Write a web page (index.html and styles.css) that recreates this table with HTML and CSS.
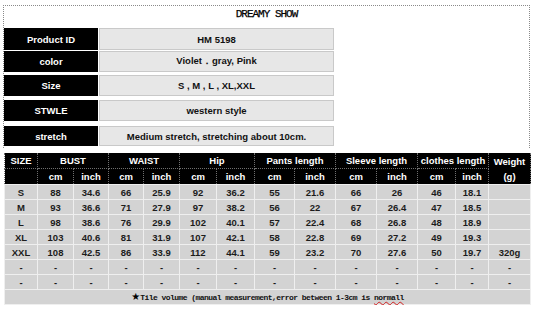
FILE: index.html
```html
<!DOCTYPE html>
<html>
<head>
<meta charset="utf-8">
<link rel="stylesheet" href="styles.css">
</head>
<body>
<div class="page">
  <section class="info">
    <div class="title">DREAMY SHOW</div>
    <div class="rows">
      <div class="row r1"><div class="label">Product ID</div><div class="value">HM 5198</div></div>
      <div class="row r2"><div class="label">color</div><div class="value">Violet．gray, Pink</div></div>
      <div class="row r3"><div class="label">Size</div><div class="value">S , M , L , XL,XXL</div></div>
      <div class="row r4"><div class="label">STWLE</div><div class="value">western style</div></div>
      <div class="row r5"><div class="label">stretch</div><div class="value">Medium stretch, stretching about 10cm.</div></div>
    </div>
  </section>
  <table class="sizes">
    <colgroup>
      <col class="w33"><col class="w36"><col class="w35"><col class="w35"><col class="w36"><col class="w37"><col class="w38">
      <col class="w40"><col class="w41"><col class="w41"><col class="w41"><col class="w38"><col class="w33"><col class="w42">
    </colgroup>
    <thead>
      <tr class="h1">
        <th>SIZE</th><th colspan="2">BUST</th><th colspan="2">WAIST</th><th colspan="2">Hip</th>
        <th colspan="2">Pants length</th><th colspan="2">Sleeve length</th><th colspan="2">clothes length</th>
        <th rowspan="2" class="weight">Weight<br>(g)</th>
      </tr>
      <tr class="h2">
        <th></th><th>cm</th><th>inch</th><th>cm</th><th>inch</th><th>cm</th><th>inch</th>
        <th>cm</th><th>inch</th><th>cm</th><th>inch</th><th>cm</th><th>inch</th>
      </tr>
    </thead>
    <tbody>
      <tr><td>S</td><td>88</td><td>34.6</td><td>66</td><td>25.9</td><td>92</td><td>36.2</td><td>55</td><td>21.6</td><td>66</td><td>26</td><td>46</td><td>18.1</td><td></td></tr>
      <tr><td>M</td><td>93</td><td>36.6</td><td>71</td><td>27.9</td><td>97</td><td>38.2</td><td>56</td><td>22</td><td>67</td><td>26.4</td><td>47</td><td>18.5</td><td></td></tr>
      <tr><td>L</td><td>98</td><td>38.6</td><td>76</td><td>29.9</td><td>102</td><td>40.1</td><td>57</td><td>22.4</td><td>68</td><td>26.8</td><td>48</td><td>18.9</td><td></td></tr>
      <tr><td>XL</td><td>103</td><td>40.6</td><td>81</td><td>31.9</td><td>107</td><td>42.1</td><td>58</td><td>22.8</td><td>69</td><td>27.2</td><td>49</td><td>19.3</td><td></td></tr>
      <tr><td>XXL</td><td>108</td><td>42.5</td><td>86</td><td>33.9</td><td>112</td><td>44.1</td><td>59</td><td>23.2</td><td>70</td><td>27.6</td><td>50</td><td>19.7</td><td>320g</td></tr>
      <tr><td>-</td><td>-</td><td>-</td><td>-</td><td>-</td><td>-</td><td>-</td><td>-</td><td>-</td><td>-</td><td>-</td><td>-</td><td>-</td><td>-</td></tr>
      <tr><td>-</td><td>-</td><td>-</td><td>-</td><td>-</td><td>-</td><td>-</td><td>-</td><td>-</td><td>-</td><td>-</td><td>-</td><td>-</td><td>-</td></tr>
      <tr class="note"><td colspan="14"><span class="star">★</span>Tile volume (manual measurement,error between 1-3cm is <span class="typo">normall</span></td></tr>
    </tbody>
  </table>
</div>
</body>
</html>
```

FILE: styles.css
```css
html, body {
  margin: 0;
  padding: 0;
  background: #ffffff;
}
.page {
  padding: 5px 3px 0 3px;
  width: 527px;
  font-family: "Liberation Sans", Arial, sans-serif;
}
.info {
  border-top: 1px dotted #8a8a8a;
  border-left: 1px dotted #8a8a8a;
  border-right: 1px dotted #8a8a8a;
  height: 143px;
  box-sizing: border-box;
}
.title {
  font-family: "Liberation Mono", monospace;
  font-size: 11px;
  letter-spacing: -1px;
  text-align: center;
  color: #000;
  height: 22px;
  line-height: 16px;
  -webkit-text-stroke: 0.25px #000;
}
.rows {
  display: flex;
  flex-direction: column;
}
.row {
  display: flex;
  height: 21px;
}
.row.r1 { height: 22px; }
.row.r2 { margin-top: 1px; }
.row.r3 { margin-top: 3px; }
.row.r4 { margin-top: 4px; }
.row.r5 { margin-top: 5px; height: 20px; }
.label {
  width: 94px;
  background: #000;
  color: #fff;
  font-weight: bold;
  font-size: 9.5px;
  display: flex;
  align-items: center;
  justify-content: center;
}
.value {
  width: 235px;
  margin-left: 1px;
  background: #e7e7e7;
  border: 1px solid #c9c9c9;
  box-sizing: border-box;
  color: #111;
  font-weight: bold;
  font-size: 9.5px;
  display: flex;
  align-items: center;
  justify-content: center;
}
.sizes {
  margin-top: 5px;
  margin-left: 1px;
  border-collapse: collapse;
  table-layout: fixed;
  width: 526px;
  font-size: 9.5px;
  font-weight: bold;
}
.w33 { width: 33px; }
.w35 { width: 35px; }
.w36 { width: 36px; }
.w37 { width: 37px; }
.w38 { width: 38px; }
.w40 { width: 40px; }
.w41 { width: 41px; }
.w42 { width: 42px; }
.sizes th {
  background: #000;
  color: #fff;
  height: 15px;
  padding: 0;
  border: 1px dotted #6f6f6f;
  text-align: center;
  line-height: 13px;
}
.sizes tr.h1 th { border-top: none; }
.sizes th.weight {
  vertical-align: top;
  padding-top: 1px;
  line-height: 15px;
}
.sizes td {
  background: #d3d3d3;
  color: #1c1c1c;
  height: 14px;
  padding: 0;
  border: 1px solid #efefef;
  text-align: center;
  line-height: 13px;
}
.sizes tr.note td {
  font-family: "Liberation Mono", monospace;
  font-size: 8px;
  font-weight: bold;
  letter-spacing: -0.55px;
  color: #111;
  height: 14px;
}
.star {
  font-family: "DejaVu Sans", sans-serif;
  font-size: 10px;
  letter-spacing: 0;
  color: #000;
}
.typo {
  text-decoration: underline wavy #d02020;
  text-decoration-thickness: 1px;
}
```
